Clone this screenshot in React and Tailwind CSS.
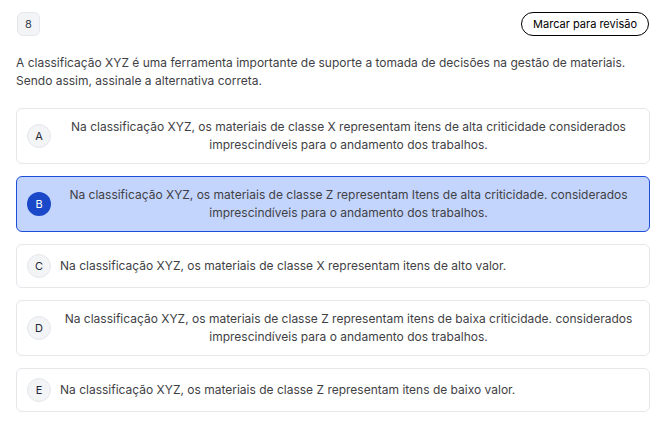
import React from 'react';

const options = [
  {
    letter: 'A',
    text: 'Na classificação XYZ, os materiais de classe X representam itens de alta criticidade considerados imprescindíveis para o andamento dos trabalhos.',
  },
  {
    letter: 'B',
    text: 'Na classificação XYZ, os materiais de classe Z representam Itens de alta criticidade. considerados imprescindíveis para o andamento dos trabalhos.',
    selected: true,
  },
  {
    letter: 'C',
    text: 'Na classificação XYZ, os materiais de classe X representam itens de alto valor.',
  },
  {
    letter: 'D',
    text: 'Na classificação XYZ, os materiais de classe Z representam itens de baixa criticidade. considerados imprescindíveis para o andamento dos trabalhos.',
  },
  {
    letter: 'E',
    text: 'Na classificação XYZ, os materiais de classe Z representam itens de baixo valor.',
  },
];

export default function App() {
  return (
    <div className="w-[666px] h-[425px] bg-white px-4 pt-3 font-['Inter',sans-serif] overflow-hidden">
      <div className="flex justify-between items-center">
        <div className="ml-px w-[23px] h-6 flex items-center justify-center rounded-md bg-[#f3f4f6] border border-[#e5e7eb] text-[11px] text-[#374151]">
          8
        </div>
        <button className="h-6 px-[11px] rounded-full border border-black text-[11px] text-black flex items-center mr-px">
          Marcar para revisão
        </button>
      </div>

      <p className="mt-[18px] text-[12px] leading-[18px] text-[#3f3f46]">
        A classificação XYZ é uma ferramenta importante de suporte a tomada de decisões na gestão de materiais.
        <br />
        Sendo assim, assinale a alternativa correta.
      </p>

      <div className="mt-[18px] flex flex-col gap-3">
        {options.map((o) => (
          <div
            key={o.letter}
            className={
              o.selected
                ? 'flex items-center gap-[9px] rounded-md border border-[#1d4ed8] bg-[#c4d5fd] pl-[10px] pr-3 py-[9px] min-h-[44px]'
                : 'flex items-center gap-[9px] rounded-md border border-[#e5e7eb] bg-white pl-[10px] pr-3 py-[9px] min-h-[44px]'
            }
          >
            <div
              className={
                o.selected
                  ? 'shrink-0 w-6 h-6 rounded-full bg-[#1a48c8] text-white text-[11px] flex items-center justify-center'
                  : 'shrink-0 w-6 h-6 rounded-full bg-[#f3f4f6] border border-[#e5e7eb] text-[#1f2937] text-[11px] flex items-center justify-center'
              }
            >
              {o.letter}
            </div>
            <div className="flex-1 text-[12px] leading-[18px] text-[#3f3f46]">
              <span className={o.text.length < 100 ? 'block text-left' : 'block text-center'}>{o.text}</span>
            </div>
          </div>
        ))}
      </div>
    </div>
  );
}
